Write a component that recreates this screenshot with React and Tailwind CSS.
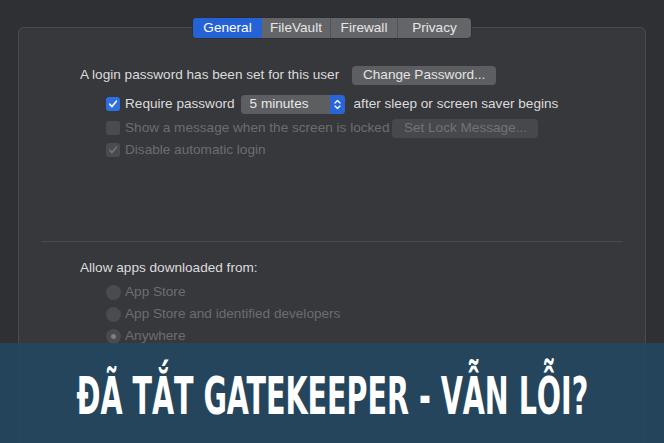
import React from "react";

function Check({ disabled, checked = true }) {
  return (
    <div
      className={
        "w-[14px] h-[14px] rounded-[3px] flex items-center justify-center shrink-0 " +
        (disabled ? "bg-[#4a4b4e]" : "bg-[#2f6fe4]")
      }
    >
      {checked && (
        <svg width="10" height="10" viewBox="0 0 10 10">
          <path
            d="M1.8 5.2 L4 7.6 L8.4 2.2"
            fill="none"
            stroke={disabled ? "#737477" : "#ffffff"}
            strokeWidth="1.6"
            strokeLinecap="round"
            strokeLinejoin="round"
          />
        </svg>
      )}
    </div>
  );
}

function Radio({ selected }) {
  return (
    <div className="w-[15px] h-[15px] rounded-full bg-[#4a4b4e] flex items-center justify-center shrink-0">
      {selected && <div className="w-[5px] h-[5px] rounded-full bg-[#7c7d80]" />}
    </div>
  );
}

export default function App() {
  return (
    <div className="w-[664px] h-[443px] bg-[#2f3034] relative overflow-hidden font-['Liberation_Sans',_Arial,_sans-serif] text-[13.6px] text-[#dcdcdd]">
      <div className="pt-[27px] pl-[18px] pr-[18px]">
        <div className="h-[430px] border border-[#4b4c50] rounded-t-[6px] bg-[#37383c]">
          {/* tabs */}
          <div className="flex justify-center -mt-[10px]">
            <div className="flex h-[20px] rounded-[4px] overflow-hidden bg-[#646568] shadow-[0_0_0_0.5px_#2a2b2e]">
              <div className="w-[69px] flex items-center justify-center bg-[#2562d6] text-white">General</div>
              <div className="w-[69px] flex items-center justify-center border-r border-[#515255] text-[#e6e6e6]">FileVault</div>
              <div className="w-[67px] flex items-center justify-center border-r border-[#515255] text-[#e6e6e6]">Firewall</div>
              <div className="w-[73px] flex items-center justify-center text-[#e6e6e6]">Privacy</div>
            </div>
          </div>

          {/* content */}
          <div className="pl-[61px] pt-[27px]">
            <div className="flex items-center h-[20px]">
              <span>A login password has been set for this user</span>
              <div className="ml-[13px] w-[144px] h-[19px] rounded-[4px] bg-[#5d5e61] flex items-center justify-center text-[#e4e4e4]">
                Change Password...
              </div>
            </div>

            <div className="pl-[26px]">
              <div className="flex items-center h-[20px] mt-[9px]">
                <Check />
                <span className="ml-[5px]">Require password</span>
                <div className="ml-[6px] w-[104px] h-[19px] rounded-[4px] bg-[#5d5e61] flex items-center overflow-hidden">
                  <span className="flex-1 pl-[9px] text-[#e8e8e8]">5 minutes</span>
                  <div className="w-[15px] h-full bg-[#2866d8] flex items-center justify-center">
                    <svg width="9" height="13" viewBox="0 0 9 13">
                      <path d="M2 5 L4.5 2.5 L7 5" fill="none" stroke="#fff" strokeWidth="1.3" strokeLinecap="round" strokeLinejoin="round" />
                      <path d="M2 8 L4.5 10.5 L7 8" fill="none" stroke="#fff" strokeWidth="1.3" strokeLinecap="round" strokeLinejoin="round" />
                    </svg>
                  </div>
                </div>
                <span className="ml-[9px]">after sleep or screen saver begins</span>
              </div>

              <div className="flex items-center h-[20px] mt-[4px] text-[#6c6d70]">
                <Check disabled checked={false} />
                <span className="ml-[5px]">Show a message when the screen is locked</span>
                <div className="ml-[3px] w-[146px] h-[19px] rounded-[4px] bg-[#47484b] flex items-center justify-center text-[#727376]">
                  Set Lock Message...
                </div>
              </div>

              <div className="flex items-center h-[20px] mt-[2px] text-[#6c6d70]">
                <Check disabled />
                <span className="ml-[5px]">Disable automatic login</span>
              </div>
            </div>
          </div>

          <div className="mx-[22px] mt-[81px] h-px bg-[#4a4b4f]" />

          <div className="pl-[61px] pt-[18px]">
            <div className="h-[16px] flex items-center">Allow apps downloaded from:</div>
            <div className="pl-[26px] mt-[9px] flex flex-col gap-[7px] text-[#6c6d70]">
              <div className="flex items-center h-[15px]">
                <Radio />
                <span className="ml-[4px]">App Store</span>
              </div>
              <div className="flex items-center h-[15px]">
                <Radio />
                <span className="ml-[4px]">App Store and identified developers</span>
              </div>
              <div className="flex items-center h-[15px]">
                <Radio selected />
                <span className="ml-[4px]">Anywhere</span>
              </div>
            </div>
          </div>
        </div>
      </div>

      {/* banner overlay */}
      <div className="absolute left-0 bottom-0 w-full h-[100px] bg-[#24475f]/[0.9] flex items-center justify-center">
        <span className="font-['DejaVu_Sans_Condensed',_sans-serif] font-bold text-[52px] text-white leading-none scale-x-[0.61] whitespace-nowrap pt-[6px]">
          ĐÃ TẮT GATEKEEPER - VẪN LỖI?
        </span>
      </div>
    </div>
  );
}
